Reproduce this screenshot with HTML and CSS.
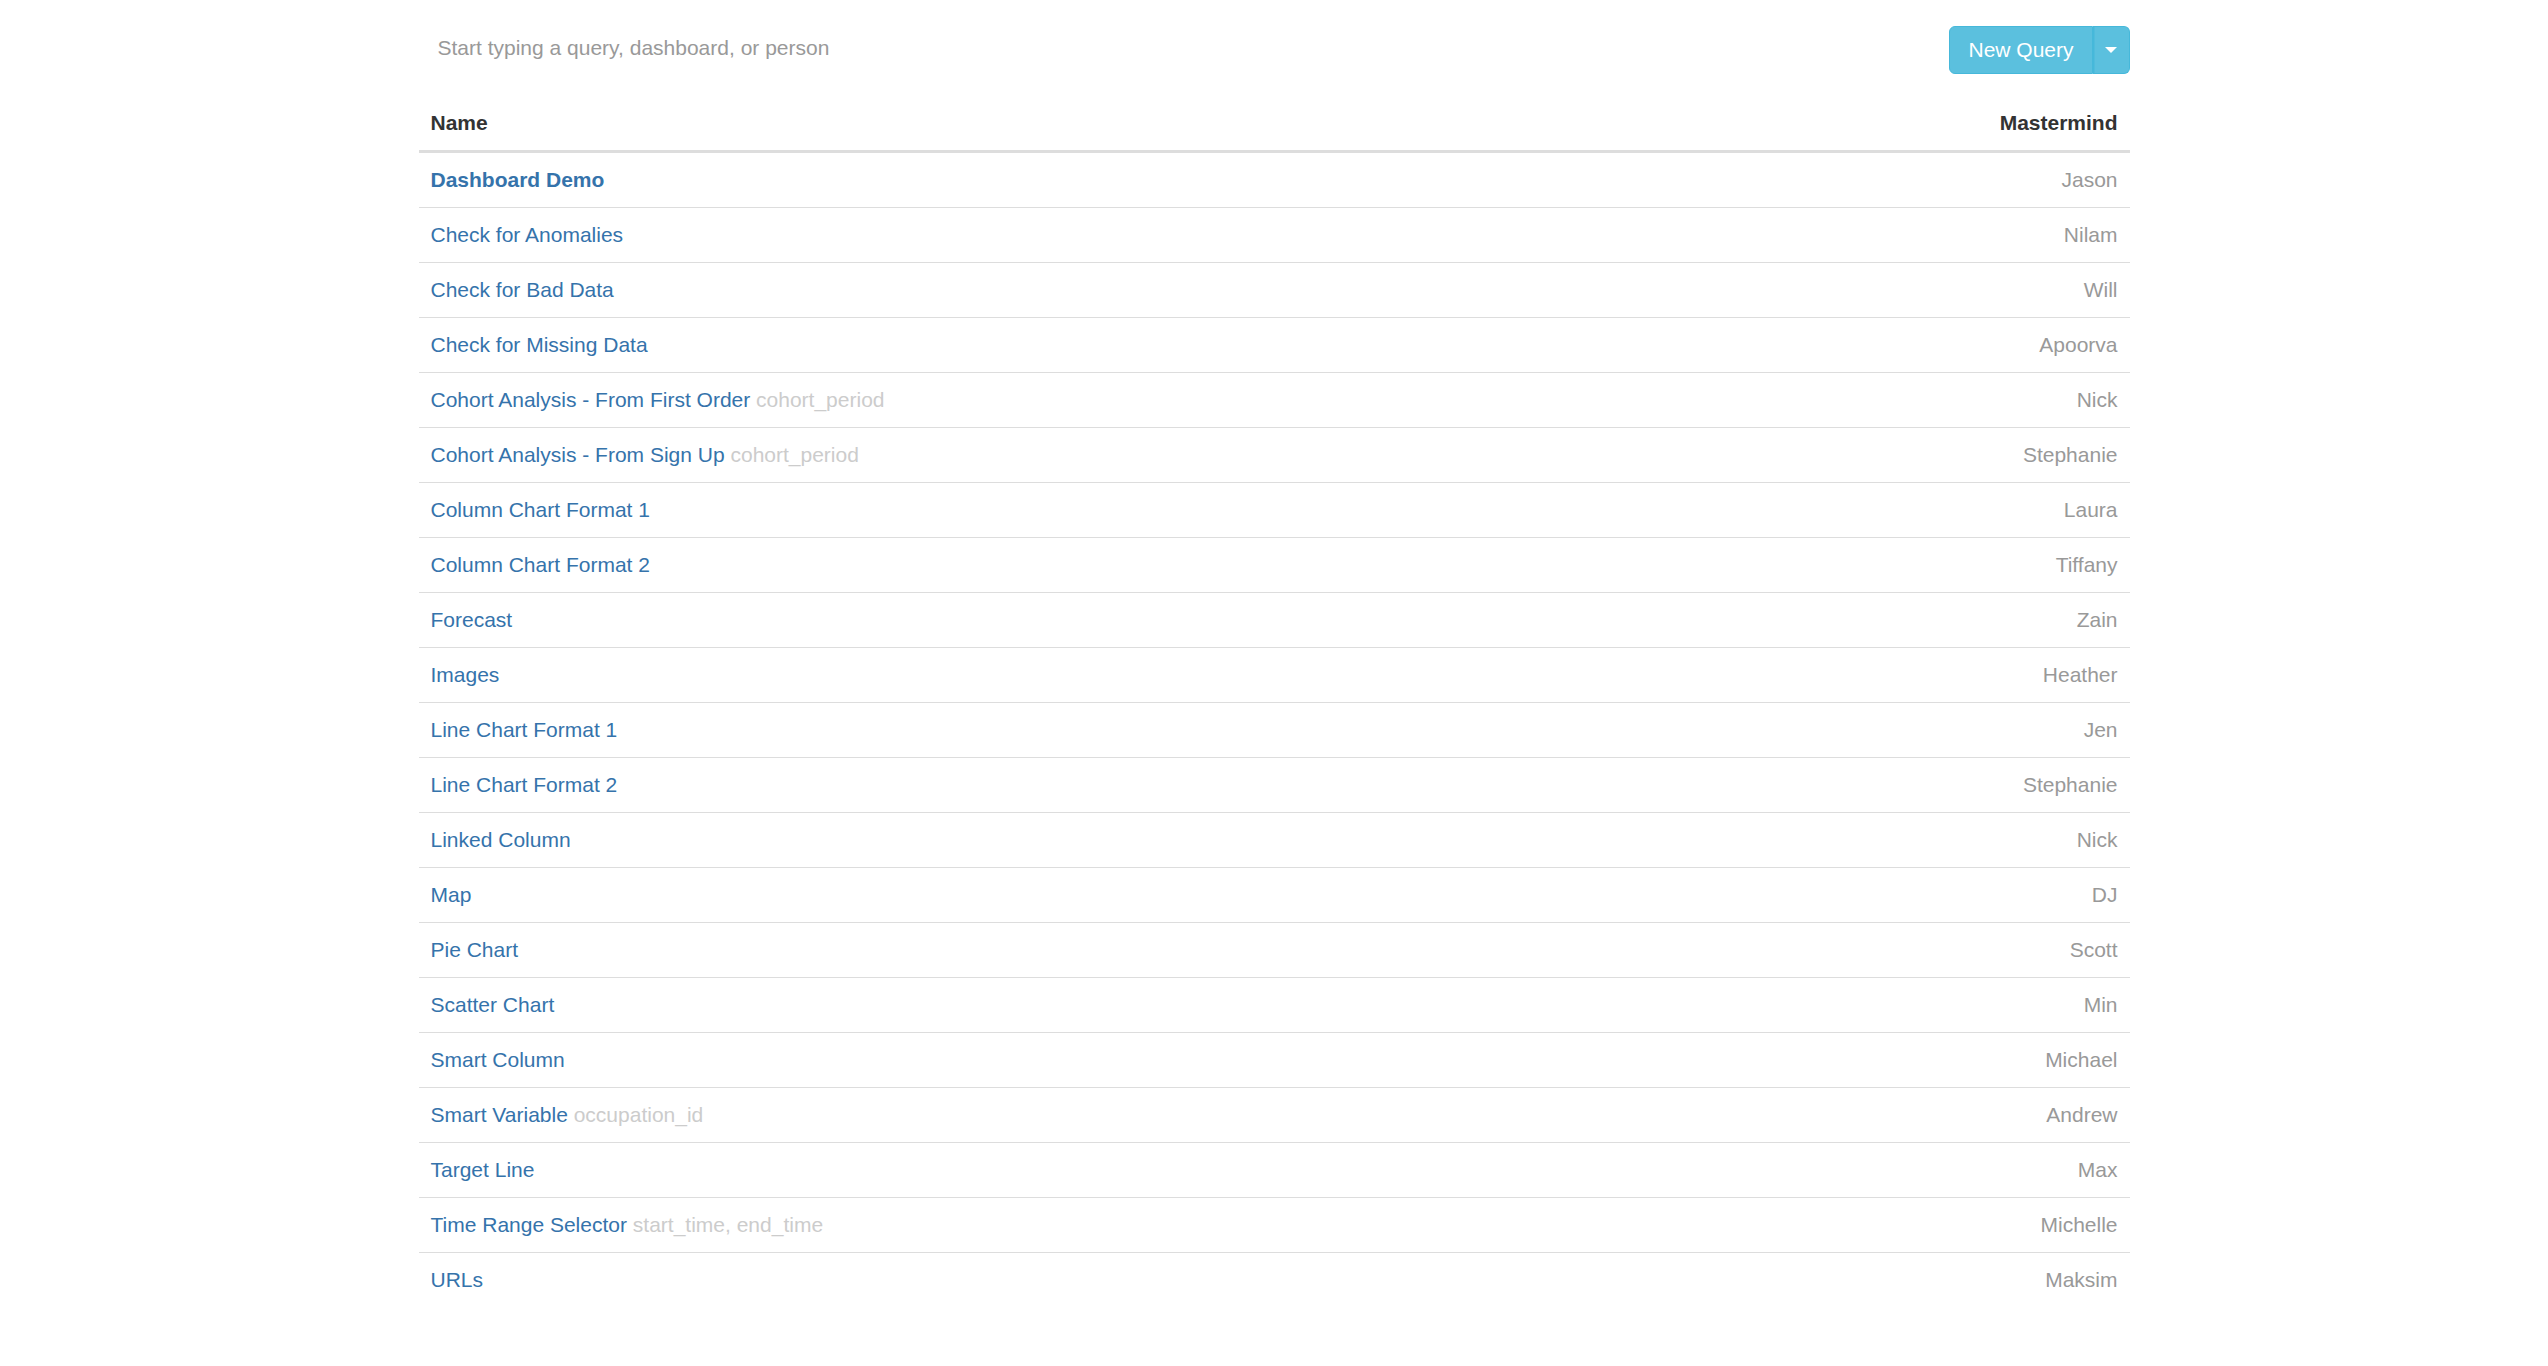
FILE: index.html
```html
<!DOCTYPE html>
<html lang="en">
<head>
    <meta charset="UTF-8">
    <title>Queries</title>
    <link rel="stylesheet" href="styles.css">
</head>
<body>
    <div class="container">
        <div class="toolbar">
            <input type="text" class="search" placeholder="Start typing a query, dashboard, or person">
            <div class="btn-group">
                <a href="#" class="btn btn--info">New Query</a>
                <button class="btn btn--info btn--toggle"><span class="caret"></span></button>
            </div>
        </div>
        <table class="queries">
            <thead>
                <tr>
                    <th>Name</th>
                    <th class="queries__creator">Mastermind</th>
                </tr>
            </thead>
            <tbody>
                <tr><td><a href="#" class="dashboard">Dashboard Demo</a></td><td class="queries__creator">Jason</td></tr>
                <tr><td><a href="#">Check for Anomalies</a></td><td class="queries__creator">Nilam</td></tr>
                <tr><td><a href="#">Check for Bad Data</a></td><td class="queries__creator">Will</td></tr>
                <tr><td><a href="#">Check for Missing Data</a></td><td class="queries__creator">Apoorva</td></tr>
                <tr><td><a href="#">Cohort Analysis - From First Order</a> <span class="vars">cohort_period</span></td><td class="queries__creator">Nick</td></tr>
                <tr><td><a href="#">Cohort Analysis - From Sign Up</a> <span class="vars">cohort_period</span></td><td class="queries__creator">Stephanie</td></tr>
                <tr><td><a href="#">Column Chart Format 1</a></td><td class="queries__creator">Laura</td></tr>
                <tr><td><a href="#">Column Chart Format 2</a></td><td class="queries__creator">Tiffany</td></tr>
                <tr><td><a href="#">Forecast</a></td><td class="queries__creator">Zain</td></tr>
                <tr><td><a href="#">Images</a></td><td class="queries__creator">Heather</td></tr>
                <tr><td><a href="#">Line Chart Format 1</a></td><td class="queries__creator">Jen</td></tr>
                <tr><td><a href="#">Line Chart Format 2</a></td><td class="queries__creator">Stephanie</td></tr>
                <tr><td><a href="#">Linked Column</a></td><td class="queries__creator">Nick</td></tr>
                <tr><td><a href="#">Map</a></td><td class="queries__creator">DJ</td></tr>
                <tr><td><a href="#">Pie Chart</a></td><td class="queries__creator">Scott</td></tr>
                <tr><td><a href="#">Scatter Chart</a></td><td class="queries__creator">Min</td></tr>
                <tr><td><a href="#">Smart Column</a></td><td class="queries__creator">Michael</td></tr>
                <tr><td><a href="#">Smart Variable</a> <span class="vars">occupation_id</span></td><td class="queries__creator">Andrew</td></tr>
                <tr><td><a href="#">Target Line</a></td><td class="queries__creator">Max</td></tr>
                <tr><td><a href="#">Time Range Selector</a> <span class="vars">start_time, end_time</span></td><td class="queries__creator">Michelle</td></tr>
                <tr><td><a href="#">URLs</a></td><td class="queries__creator">Maksim</td></tr>
            </tbody>
        </table>
    </div>
</body>
</html>
```

FILE: styles.css
```css
body {
    margin: 0;
    background-color: #fff;
    color: #333;
    font-family: "Liberation Sans", Arial, sans-serif;
    font-size: 21px;
    line-height: 30px;
}

.container {
    width: 1711px;
    margin: 0 auto;
}

.toolbar {
    display: flex;
    justify-content: space-between;
    align-items: center;
    padding-top: 25.5px;
    margin-bottom: 22px;
}

.search {
    width: 700px;
    height: 40px;
    margin-bottom: 4px;
    padding: 0 19px;
    border: none;
    outline: none;
    font-family: inherit;
    font-size: 21px;
    color: #555;
}

.search::placeholder {
    color: #999;
}

.btn-group {
    display: flex;
}

.btn {
    display: inline-block;
    padding: 8px 18px;
    border: 1.5px solid #46b8da;
    font-family: inherit;
    font-size: 21px;
    line-height: 30px;
    text-decoration: none;
    cursor: pointer;
}

.btn--info {
    background-color: #5bc0de;
    color: #fff;
    border-radius: 6px 0 0 6px;
}

.btn--toggle {
    display: flex;
    align-items: center;
    padding: 8px 12px;
    border-left: none;
    border-radius: 0 6px 6px 0;
    box-shadow: inset 1.5px 0 0 #46b8da;
}

.caret {
    width: 0;
    height: 0;
    border-top: 6px solid #fff;
    border-left: 6px solid transparent;
    border-right: 6px solid transparent;
}

.queries {
    width: 100%;
    border-collapse: separate;
    border-spacing: 0;
}

.queries th {
    padding: 12px;
    text-align: left;
    font-weight: bold;
    border-bottom: 3px solid #ddd;
}

.queries td {
    padding: 12px;
    border-top: 1px solid #ddd;
}

.queries tbody tr:first-child td {
    border-top: none;
}

.queries .queries__creator {
    text-align: right;
}

td.queries__creator {
    color: #999;
}

.queries a {
    color: #3573ab;
    text-decoration: none;
}

.queries a.dashboard {
    font-weight: bold;
}

.vars {
    color: #ccc;
}
```
